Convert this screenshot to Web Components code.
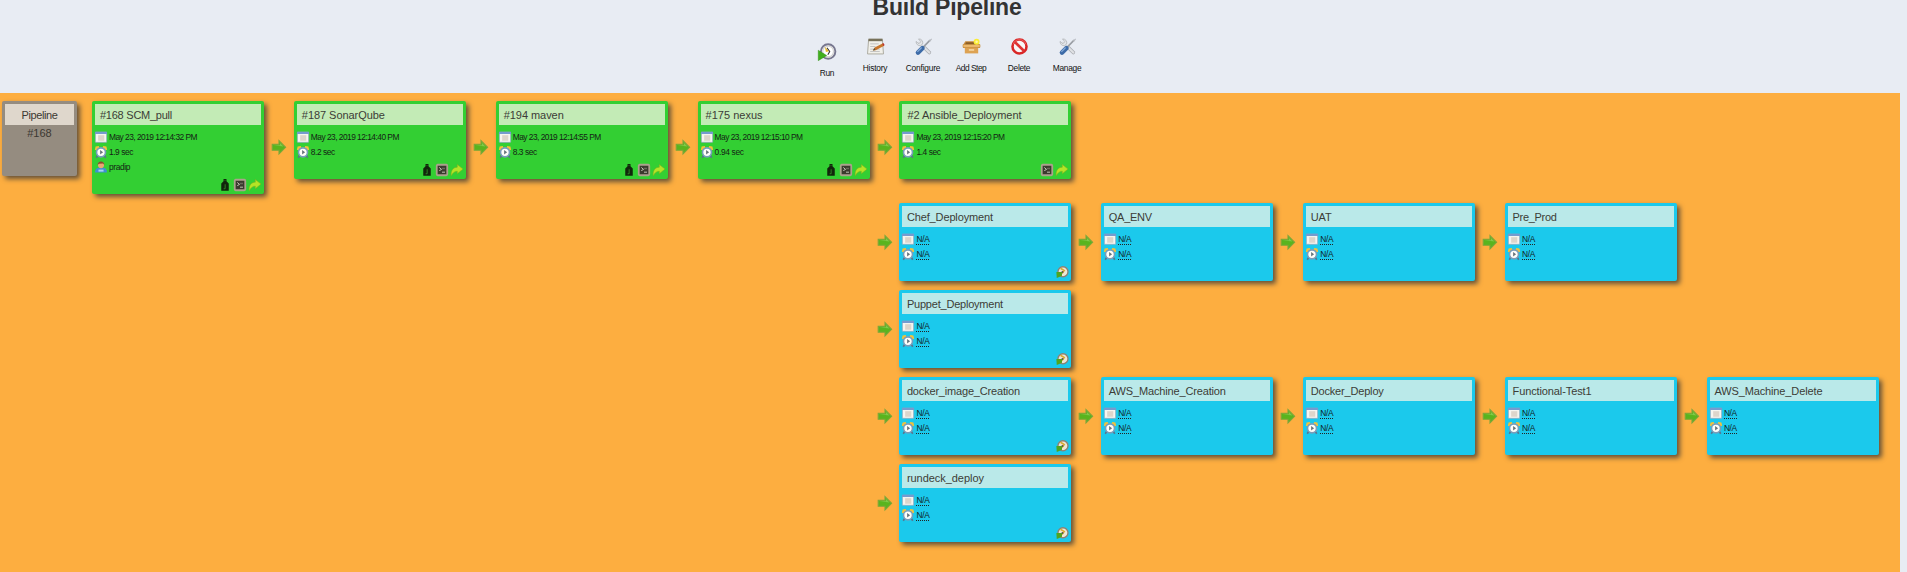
<!DOCTYPE html>
<html lang="en"><head><meta charset="utf-8"><title>Build Pipeline</title>
<style>html,body{margin:0;height:572px;overflow:hidden;background:#e8ecf3;font-family:"Liberation Sans",Arial,sans-serif;color:#333}</style></head>
<body><pipeline-page></pipeline-page>
<script>
const ICONS={
run:`<circle cx="8.6" cy="8" r="6.8" fill="#f1f0ec" stroke="#77778f" stroke-width="1.8"/><circle cx="8.6" cy="8" r="5" fill="#fff" stroke="#d0d0d0" stroke-width="1"/><path d="M5.5 3.5l4 4.3-3 .6z" fill="#e8b928"/><path d="M7.5 4.5l2.6 3.5-1.8 3" fill="none" stroke="#333" stroke-width="1"/><path d="M-.7 6.8l8 5L-.7 16.6z" fill="#3fae1c" stroke="#2b8c10" stroke-width=".4"/>`,
runsmall:`<circle cx="9.3" cy="7.7" r="6.7" fill="#eee6d6" stroke="#8d8172" stroke-width="1.8"/><path d="M6 3l5 3-3 4" fill="none" stroke="#d9ab32" stroke-width="2"/><circle cx="8.6" cy="8" r="1.3" fill="#555"/><path d="M.5 8h7.5v5l-3 1.4L1 16z" fill="#4fa51f"/>`,
history:`<path d="M1.5 1.5h13l1 13.5H.5z" fill="#f1f0ea" stroke="#aaa99e" stroke-width=".9"/><path d="M1.4 .6h13.2v2.4H1.4z" fill="#77715a"/><path d="M3 5.5h8M3 8h5M3 10.5h9M3 12.7h9" stroke="#bbb" stroke-width=".8"/><path d="M5.5 11.8L7.2 9 15 5l1.2 2.2-8 4.3z" fill="#c8752b"/><path d="M14.4 5.3l1-.6 1.2 2-1 .8z" fill="#bd3030"/><path d="M5.5 11.8l1.5-2.3.9 1.8z" fill="#554"/>`,
tools:`<path d="M9 9.2l4.5 4.5" stroke="#a8abb0" stroke-width="3.3" stroke-linecap="round"/><path d="M3.8 4.2L13.5 13.6" stroke="#dfe1e4" stroke-width="2.1" stroke-linecap="round"/><path d="M1 3.2L3.7 5.4 5.5 3.5 3.3.9A3.6 3.6 0 0 1 7.2 5.6L5.2 7.2A3.7 3.7 0 0 1 1 3.2z" fill="#e3e5e8" stroke="#a5a8ac" stroke-width=".6"/><path d="M8 8.3L14.2 2" stroke="#999da3" stroke-width="1.5"/><path d="M13 2.6L15.4.5l.6.7-2 2.6z" fill="#b8bbc1"/><path d="M2.8 13.7L7 9.5" stroke="#3d6ba7" stroke-width="4.3" stroke-linecap="round"/><path d="M2.2 13.1L6.2 9" stroke="#84aad8" stroke-width="1.2"/>`,
box:`<path d="M0 6.5L2.2 3h10.8l3 3.5v3H0z" fill="#c98c3a"/><path d="M3 3.9h9.5l1.3 2.1H1.8z" fill="#8a5e28"/><path d="M1.7 9h12.6v5.5H1.7z" fill="#dda252"/><path d="M0 6.2h16v2.6H0z" fill="#efbd72" stroke="#c58c3d" stroke-width=".6"/><path d="M5.5 10.5h5V12h-5z" fill="#f6d9a6"/><circle cx="12.8" cy="3.6" r="2.8" fill="#fbed35"/><circle cx="12.8" cy="3.5" r="1.2" fill="#fff9a5"/>`,
del:`<circle cx="8" cy="8" r="6.6" fill="#f8f6f6" stroke="#d92626" stroke-width="2.4"/><path d="M3.7 3.9l8.6 8.4" stroke="#df3333" stroke-width="2.5"/><path d="M2 6A6.3 6.3 0 0 1 14 6" fill="none" stroke="#f27373" stroke-width=".7"/>`,
cal:`<rect x=".5" y="1.6" width="15" height="13.5" rx=".7" fill="#f6f5f0" stroke="#91aabf" stroke-width="1"/><path d="M0 1h16v3H0z" fill="#759bcf"/><path d="M4.2 5.6h8.2v7.4H4.2z" fill="#ddd5cb"/>`,
clock:`<path d="M-.2 5L.8 .8 5 0 6 2.4 2.4 6zM16.2 5L15.2 .8 11 0 10 2.4 13.6 6z" fill="#f2c33c"/><path d="M3.8 12.2L1.7 15.6M12.2 12.2l2.1 3.4" stroke="#59728d" stroke-width="2.2"/><circle cx="8" cy="8.4" r="6" fill="#fffefa" stroke="#789dbb" stroke-width="2.2"/><path d="M6.8 5.3v5.9l4-2.9z" fill="#67747a"/>`,
user:`<path d="M.3 15.4C-.6 12 2 9 5 9h6c3.2 0 5.5 3 4.7 6.4z" fill="#3f8fd2"/><path d="M4.6 12.8h6.8" stroke="#a6d6f3" stroke-width="2.6"/><circle cx="8" cy="5.4" r="4.1" fill="#e9a673"/><path d="M3.6 5.4C3-.9 13-.9 12.4 5.4L10.8 3.4 5.2 3.6z" fill="#88492b"/>`,
bag:`<path d="M6 0h4v3l3 3v9.8H3V6l3-3z" fill="#11260b"/><path d="M8.2 7v6h-2" fill="none" stroke="#35982a" stroke-width="1.1"/><path d="M7.4 1.3h1.2v1.2H7.4z" fill="#2c701f"/>`,
term:`<rect x="1" y="1" width="14" height="14" rx="1.2" fill="#3b3a2e" stroke="#aca18d" stroke-width="2.4"/><path d="M4.4 4.6l3 2.6-3 1.6M8 10.9h4" fill="none" stroke="#d0d2c2" stroke-width="1.2"/><path d="M8 5h4v2H8z" fill="#686959"/>`,
redo:`<path d="M.4 15.6C-.8 8.5 3.5 4.2 8.4 4.2V.6l7.6 6.2-7.6 6.2V9.6C5 9.4 2.6 11.6.4 15.6z" fill="#b4e426" stroke="#81ad1c" stroke-width=".7"/>`,
arrow:`<path d="M1.2 5.3h6.8V1.7l6.6 6.6L8 15v-3.8H1.2z" fill="#59b41e" stroke="#7ea63a" stroke-width="1.1"/><path d="M2.2 6.3h6.8V4l3.4 3.6z" fill="#7fc94a"/>`};
class PipeIcon extends HTMLElement{
 connectedCallback(){if(this.shadowRoot)return;const s=this.getAttribute('size')||16;
 this.attachShadow({mode:'open'}).innerHTML=`<style>:host{display:block;flex:none;width:${s}px;height:${s}px}svg{display:block;overflow:visible}</style><svg width="${s}" height="${s}" viewBox="0 0 16 16">${ICONS[this.getAttribute('name')]}</svg>`;}}
customElements.define('pipe-icon',PipeIcon);
/* Text run whose tracking is adjusted to a given width. */
class FitText extends HTMLElement{
 connectedCallback(){if(this.shadowRoot)return;
 this.attachShadow({mode:'open'}).innerHTML=`<style>:host{display:inline-block;white-space:pre}</style><slot></slot>`;
 const w=+this.getAttribute('w');if(w){const n=this.getBoundingClientRect().width;this.style.letterSpacing=((w-n)/this.textContent.length)+'px';}}}
customElements.define('fit-text',FitText);
class ToolItem extends HTMLElement{
 connectedCallback(){if(this.shadowRoot)return;
 this.attachShadow({mode:'open'}).innerHTML=`<style>:host{display:flex;flex-direction:column;align-items:center;width:48px;font-size:8.4px;line-height:10px;color:#111}pipe-icon{margin-bottom:8px}</style><pipe-icon name="${this.getAttribute('icon')}" size="17"></pipe-icon><fit-text w="${this.getAttribute('w')}">${this.getAttribute('label')}</fit-text>`;}}
customElements.define('tool-item',ToolItem);
class BuildCard extends HTMLElement{
 connectedCallback(){if(this.shadowRoot)return;const g=k=>this.getAttribute(k);const ok=g('time');
 const line=(i,t,w)=>`<div class="line"><pipe-icon name="${i}" size="12"></pipe-icon><fit-text class="${t==='N/A'?'na':''}" w="${w}">${t}</fit-text></div>`;
 const lines=ok?line('cal',`May 23, 2019 ${ok} PM`,88)+line('clock',g('dur'),g('dw'))+(g('user')?line('user',g('user'),21):''):line('cal','N/A',13)+line('clock','N/A',13);
 this.attachShadow({mode:'open'}).innerHTML=`<style>
 :host{display:flex;flex-direction:column;flex:none;box-sizing:border-box;width:172px;height:${g('user')?93:78}px;padding:3px;border-radius:2px;background:${ok?'#33cf33':'#1bc9ec'};box-shadow:3px 3px 5px #665238}
 h3{margin:0;height:21px;line-height:22px;padding-left:${ok?5:4.5}px;font-size:11px;font-weight:400;background:${ok?'#c3ebb6':'#bae9e9'};color:#3c3c36}
 .lines{padding-top:4px;flex:1}.line{display:flex;align-items:center;height:15px;gap:2px;font-size:8.4px;line-height:10px;color:#142414}
 .line pipe-icon{margin-top:1px}
 .na{line-height:10px;border-bottom:1px dotted #222;color:#122}.line .na{margin-top:1px}
 .foot{display:flex;justify-content:flex-end;gap:3px;height:12px;margin:-12px 0 0 0}
 </style><h3><fit-text w="${g('w')}">${g('name')}</fit-text></h3><div class="lines">${lines}</div><div class="foot">${(g('acts')||'').split(' ').filter(Boolean).map(a=>`<pipe-icon name="${a}" size="12"></pipe-icon>`).join('')}</div>`;}}
customElements.define('build-card',BuildCard);
class RunCard extends HTMLElement{
 connectedCallback(){if(this.shadowRoot)return;
 this.attachShadow({mode:'open'}).innerHTML=`<style>:host{display:block;flex:none;box-sizing:border-box;width:75px;height:75px;margin-right:15px;padding:3px;border-radius:2px;background:#958c80;box-shadow:3px 3px 5px #665238;font-size:11px;text-align:center;color:#3c3832}.h{height:21px;line-height:22px;background:#dfd7cc}.n{line-height:17px}</style><div class="h"><fit-text w="36">Pipeline</fit-text></div><div class="n"><fit-text w="24.5">#168</fit-text></div>`;}}
customElements.define('run-card',RunCard);
class StageRow extends HTMLElement{
 connectedCallback(){if(this.shadowRoot)return;
 this.attachShadow({mode:'open'}).innerHTML=`<style>:host{display:flex;align-items:flex-start}:host([branch]){height:78px;padding-left:869.58px;margin-bottom:9px}:host([first]){height:93px;padding-left:2px;margin-bottom:9px}</style><slot></slot>`;}}
customElements.define('stage-row',StageRow);
class StepArrow extends HTMLElement{
 connectedCallback(){if(this.shadowRoot)return;
 this.attachShadow({mode:'open'}).innerHTML=`<style>:host{display:flex;flex:none;align-self:stretch;align-items:center;justify-content:center;width:29.86px}pipe-icon{margin-top:-1px}</style><pipe-icon name="arrow"></pipe-icon>`;}}
customElements.define('step-arrow',StepArrow);
const c=(n,w,x='')=>`<build-card name="${n}" w="${w}" ${x}></build-card>`,A='<step-arrow></step-arrow>',R='acts="runsmall"';
const green=(t,d,dw,a)=>`time="${t}" dur="${d}" dw="${dw}" acts="${a}"`;
class PipelinePage extends HTMLElement{
 connectedCallback(){if(this.shadowRoot)return;
 this.attachShadow({mode:'open'}).innerHTML=`<style>:host{display:flex;flex-direction:column;height:572px}
 header{height:93px;flex:none;display:flex;flex-direction:column}h1{margin:-9px 0 0;padding-right:13px;text-align:center;font-size:23px;line-height:32px;height:32px;color:#333}
 nav{display:flex;padding:15px 0 0 803px}tool-item:first-child{margin-top:5px}
 main{flex:1;width:1900px;box-sizing:border-box;background:#fdae40;padding-top:8px}</style>
 <header><h1><fit-text w="149">Build Pipeline</fit-text></h1><nav>
 <tool-item icon="run" label="Run" w="14.5"></tool-item><tool-item icon="history" label="History" w="24.5"></tool-item><tool-item icon="tools" label="Configure" w="34.5"></tool-item><tool-item icon="box" label="Add Step" w="30.5"></tool-item><tool-item icon="del" label="Delete" w="22.5"></tool-item><tool-item icon="tools" label="Manage" w="28.5"></tool-item></nav></header>
 <main><stage-row first><run-card></run-card>${[c('#168 SCM_pull',72,green('12:14:32','1.9 sec',24,'bag term redo')+' user="pradip"'),c('#187 SonarQube',83,green('12:14:40','8.2 sec',24,'bag term redo')),c('#194 maven',60,green('12:14:55','8.3 sec',24,'bag term redo')),c('#175 nexus',57,green('12:15:10','0.94 sec',29,'bag term redo')),c('#2 Ansible_Deployment',114,green('12:15:20','1.4 sec',24,'term redo'))].join(A)}</stage-row>
 <stage-row branch>${A}${[c('Chef_Deployment',86,R),c('QA_ENV',43),c('UAT',21),c('Pre_Prod',44)].join(A)}</stage-row>
 <stage-row branch>${A}${c('Puppet_Deployment',96,R)}</stage-row>
 <stage-row branch>${A}${[c('docker_image_Creation',113,R),c('AWS_Machine_Creation',117),c('Docker_Deploy',73),c('Functional-Test1',79),c('AWS_Machine_Delete',108)].join(A)}</stage-row>
 <stage-row branch>${A}${c('rundeck_deploy',77,R)}</stage-row></main>`;}}
customElements.define('pipeline-page',PipelinePage);
</script></body></html>
